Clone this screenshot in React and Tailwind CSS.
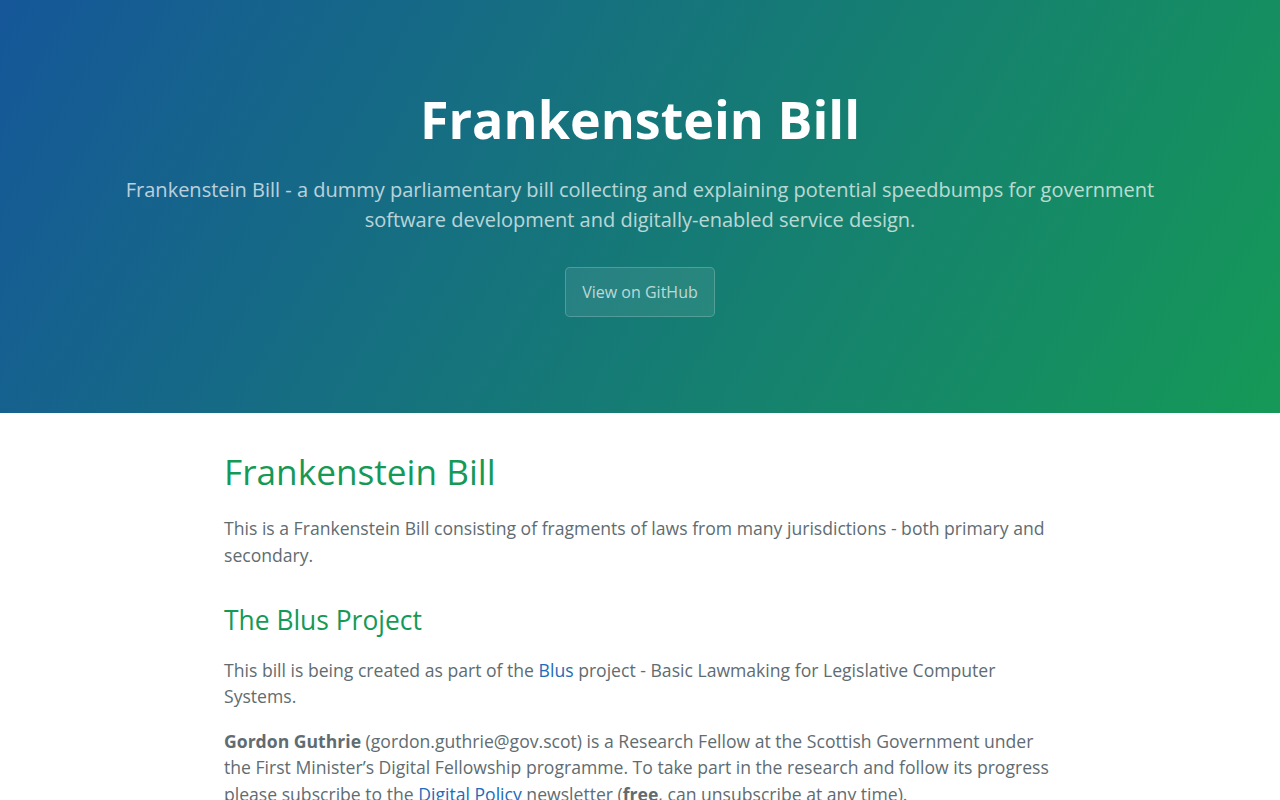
export default function App() {
  return (
    <div
      className="min-h-screen bg-white text-[#606c71]"
      style={{ fontFamily: '"Open Sans", "Helvetica Neue", Helvetica, Arial, sans-serif' }}
    >
      {/* Header */}
      <section className="bg-[linear-gradient(120deg,#155799,#159957)] px-24 py-20 text-center text-white">
        <h1 className="mb-[0.1rem] text-[3.25rem] font-bold leading-[1.5]">Frankenstein Bill</h1>
        <h2 className="mt-[16.6px] mb-8 text-[1.25rem] font-normal leading-[1.5] opacity-70">
          Frankenstein Bill - a dummy parliamentary bill collecting and explaining potential speedbumps for government software development and digitally-enabled service design.
        </h2>
        <a
          href="#"
          className="mb-4 inline-block rounded-[0.3rem] border border-white/20 bg-white/[0.08] px-4 py-3 text-base leading-6 text-white/70"
        >
          View on GitHub
        </a>
      </section>

      {/* Main content */}
      <section className="mx-auto max-w-[64rem] px-24 py-8 text-[1.1rem] leading-[1.5]">
        <h1 className="mb-[18px] text-[2.2rem] font-normal leading-[1.5] text-[#159957]">Frankenstein Bill</h1>
        <p className="mb-[18px]">
          This is a Frankenstein Bill consisting of fragments of laws from many jurisdictions - both primary and secondary.
        </p>

        <h2 className="mt-[33px] mb-4 text-[1.65rem] font-normal leading-[1.5] text-[#159957]">The Blus Project</h2>
        <p className="mb-[18.5px]">
          This bill is being created as part of the <a href="#" className="text-[#1e6bb8]">Blus</a> project - Basic Lawmaking for Legislative Computer Systems.
        </p>
        <p className="mb-[18px]">
          <strong className="font-bold">Gordon Guthrie</strong> (gordon.guthrie@gov.scot) is a Research Fellow at the Scottish Government under the First Minister’s Digital Fellowship programme. To take part in the research and follow its progress please subscribe to the <a href="#" className="text-[#1e6bb8]">Digital Policy</a> newsletter (<strong className="font-bold">free</strong>, can unsubscribe at any time).
        </p>
        <p className="mb-[18px]">
          The bill is a working document and will change as the research progresses.
        </p>
      </section>
    </div>
  )
}
